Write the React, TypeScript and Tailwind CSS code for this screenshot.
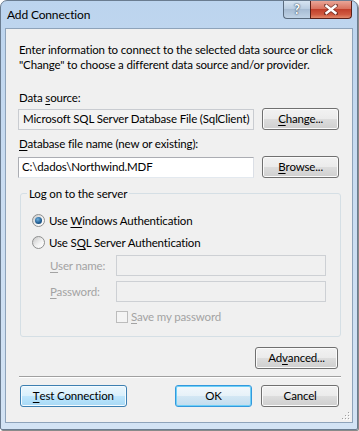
import React from "react";

const font = "font-['Segoe_UI','Lato',sans-serif]";

const btn =
  "h-[22px] rounded-[3px] border border-[#707070] bg-[linear-gradient(to_bottom,#f2f2f2_0%,#ebebeb_50%,#dddddd_50%,#cfcfcf_100%)] shadow-[inset_0_0_0_1px_#fbfbfb] text-black flex items-center justify-center whitespace-nowrap";

function U({ children }: { children: React.ReactNode }) {
  return <span className="underline underline-offset-[2px] decoration-1">{children}</span>;
}

function Radio({ checked }: { checked?: boolean }) {
  return (
    <span className="w-[13px] h-[13px] rounded-full border border-[#8e8f8f] bg-[linear-gradient(135deg,#c8c8c8,#f4f4f4_60%,#ffffff)] flex items-center justify-center shrink-0">
      {checked && (
        <span className="w-[7px] h-[7px] rounded-full bg-[radial-gradient(circle_at_40%_35%,#6fb1e0,#1f5a8e_60%,#0e3b66)]" />
      )}
    </span>
  );
}

export default function App() {
  return (
    <div className={`w-[359px] h-[431px] bg-white overflow-hidden whitespace-nowrap text-[11.5px] tracking-[-0.15px] ${font}`}>
      <div className="w-[358px] h-[430px] rounded-t-[7px] rounded-b-[2px] border border-[#6a7c90] bg-[linear-gradient(to_bottom,#bcd4ee,#c9dcf1_40%,#d3e3f4)] flex flex-col shadow-[1px_1px_0_#8a8a8a]">
        {/* title bar */}
        <div className="h-[27px] flex items-start shrink-0">
          <div className="pl-[6px] pt-[6px] text-[12px] leading-[16px] text-black">Add Connection</div>
          <div className="ml-auto mr-[5px] flex">
            <div className="w-[27px] h-[18px] rounded-bl-[4px] border border-t-0 border-r-0 border-[#5a6b7e] bg-[linear-gradient(to_bottom,#d6e4f2,#b7cbe0_50%,#a7bcd3_50%,#c0d3e6)] flex items-center justify-center text-[13px] font-bold text-white [text-shadow:0_0_2px_#33475c,0_0_1px_#33475c] leading-none">
              ?
            </div>
            <div className="w-[42px] h-[18px] rounded-br-[4px] border border-t-0 border-[#5b2018] bg-[linear-gradient(to_bottom,#e9a597,#d9735f_45%,#c1402b_50%,#d05a40_80%,#e28a6c)] flex items-center justify-center">
              <svg width="14" height="11" viewBox="0 0 14 11">
                <path d="M2 1.5 L12 9.5 M12 1.5 L2 9.5" stroke="#3b1410" strokeWidth="4" strokeLinecap="square" opacity="0.55" />
                <path d="M2.5 2 L11.5 9 M11.5 2 L2.5 9" stroke="#ffffff" strokeWidth="2.4" strokeLinecap="square" />
              </svg>
            </div>
          </div>
        </div>
        {/* client area */}
        <div className="mx-[4px] h-[395px] border border-[#8ea3ba] bg-[#f0f0f0] text-black relative">
          <div className="pl-[12px] pr-[13px] pt-[13px] flex flex-col">
            <p className="leading-[15px] pl-[1px]">
              Enter information to connect to the selected data source or click
              <br />
              "Change" to choose a different data source and/or provider.
            </p>
            <div className="mt-[18px] leading-[15px] pl-[1px]">
              Data <U>s</U>ource:
            </div>
            <div className="mt-[3px] flex items-center gap-[8px]">
              <div className="w-[237px] h-[21px] border border-[#c9ccd1] bg-[#f3f3f3] flex items-center pl-[4px] leading-none overflow-hidden">
                Microsoft SQL Server Database File (SqlClient)
              </div>
              <div className={`${btn} w-[77px]`}>
                <U>C</U>hange...
              </div>
            </div>
            <div className="mt-[6px] leading-[15px] pl-[1px]">
              <U>D</U>atabase file name (new or existing):
            </div>
            <div className="mt-[5px] flex items-center gap-[8px]">
              <div className="w-[237px] h-[21px] border border-[#abadb3] border-b-[#e3e9ef] border-r-[#dbdfe6] bg-white flex items-center pl-[3px] leading-none">
                C:\dados\Northwind.MDF
              </div>
              <div className={`${btn} w-[77px]`}>
                <U>B</U>rowse...
              </div>
            </div>

            <fieldset className="mt-[8px] ml-[2px] w-[321px] h-[151px] border border-[#d5dfe5] rounded-[3px] px-[11px]">
              <legend className="px-[2px] ml-[-5px] leading-[15px]">Log on to the server</legend>
              <div className="mt-[12px] flex items-center gap-[4px] leading-[15px]">
                <Radio checked />
                <span>
                  Use <U>W</U>indows Authentication
                </span>
              </div>
              <div className="mt-[7px] flex items-center gap-[4px] leading-[15px]">
                <Radio />
                <span>
                  Use S<U>Q</U>L Server Authentication
                </span>
              </div>
              <div className="mt-[5px] flex items-center text-[#a3a3a3]">
                <div className="w-[84px] pl-[18px] leading-[15px]">
                  <U>U</U>ser name:
                </div>
                <div className="w-[210px] h-[21px] border border-[#cdd0d4] bg-[#f0f0f0]" />
              </div>
              <div className="mt-[5px] flex items-center text-[#a3a3a3]">
                <div className="w-[84px] pl-[18px] leading-[15px]">
                  <U>P</U>assword:
                </div>
                <div className="w-[210px] h-[21px] border border-[#cdd0d4] bg-[#f0f0f0]" />
              </div>
              <div className="mt-[7px] ml-[84px] flex items-center gap-[3px] text-[#a3a3a3] leading-[15px]">
                <span className="w-[12px] h-[12px] border border-[#bcbcbc] bg-[#f4f4f4] shrink-0" />
                <span>
                  <U>S</U>ave my password
                </span>
              </div>
            </fieldset>

            <div className="mt-[10px] flex justify-end pr-[1px]">
              <div className={`${btn} w-[83px]`}>
                Ad<U>v</U>anced...
              </div>
            </div>
            <div className="mt-[7px] ml-[1px] w-[322px] h-[2px] border-t border-[#a0a0a0] border-b-white border-b" />
            <div className="mt-[7px] flex items-center pl-[2px]">
              <div className="w-[107px] h-[22px] rounded-[3px] border border-[#3c7fb1] bg-[linear-gradient(to_bottom,#eaf6fd_0%,#d9f0fc_50%,#bee6fd_50%,#a7d9f5_100%)] shadow-[inset_0_0_0_1px_#f4fbff] flex items-center justify-center">
                <U>T</U>est Connection
              </div>
              <div className="ml-[48px] w-[78px] h-[22px] rounded-[3px] border border-[#3399dd] bg-[linear-gradient(to_bottom,#f2f8fc_0%,#e6f1f8_50%,#d3e7f4_50%,#c2ddef_100%)] shadow-[inset_0_0_0_1px_#6fd0f7] flex items-center justify-center">
                OK
              </div>
              <div className={`${btn} ml-[9px] w-[78px]`}>Cancel</div>
            </div>
          </div>
          {/* size grip */}
          <svg className="absolute right-[1px] bottom-[1px]" width="10" height="10" viewBox="0 0 10 10">
            {[
              [8, 2],
              [8, 5],
              [5, 5],
              [8, 8],
              [5, 8],
              [2, 8],
            ].map(([x, y], i) => (
              <g key={i}>
                <rect x={x} y={y} width="1" height="1" fill="#ffffff" />
                <rect x={x - 1} y={y - 1} width="1" height="1" fill="#a0a0a0" />
              </g>
            ))}
          </svg>
        </div>
      </div>
    </div>
  );
}
